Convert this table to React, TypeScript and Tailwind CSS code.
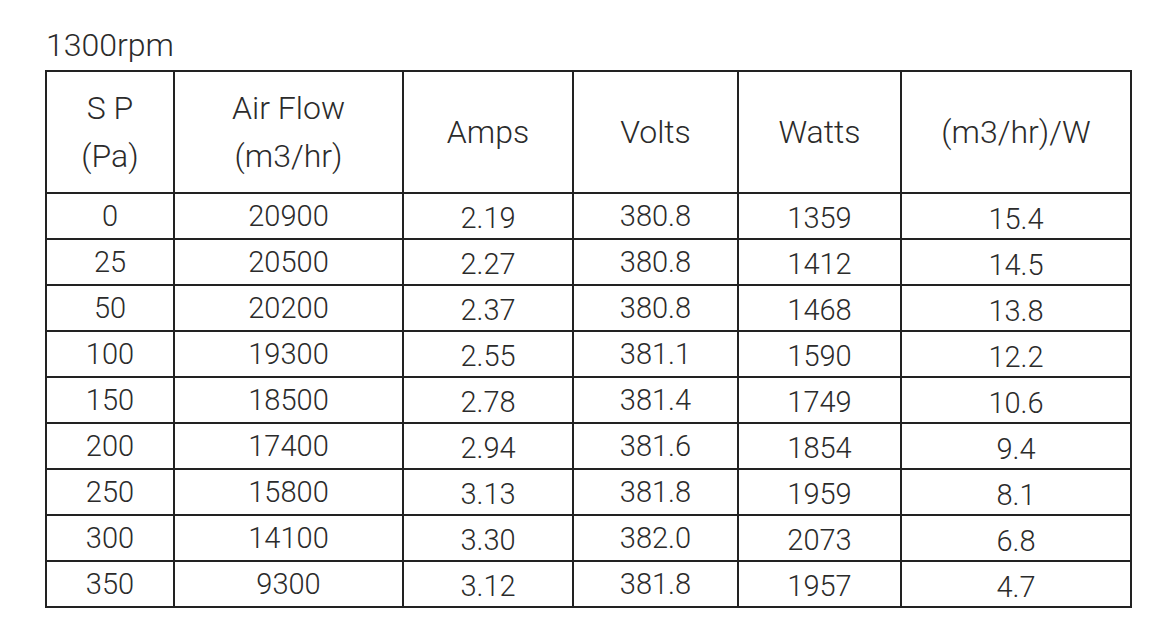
import React from 'react'

const rows = [
  ['0', '20900', '2.19', '380.8', '1359', '15.4'],
  ['25', '20500', '2.27', '380.8', '1412', '14.5'],
  ['50', '20200', '2.37', '380.8', '1468', '13.8'],
  ['100', '19300', '2.55', '381.1', '1590', '12.2'],
  ['150', '18500', '2.78', '381.4', '1749', '10.6'],
  ['200', '17400', '2.94', '381.6', '1854', '9.4'],
  ['250', '15800', '3.13', '381.8', '1959', '8.1'],
  ['300', '14100', '3.30', '382.0', '2073', '6.8'],
  ['350', '9300', '3.12', '381.8', '1957', '4.7'],
]

// some columns in the source sit a touch lower
const cellShift = ['', '', 'pt-1', '', 'pt-1', 'pt-[6px]']

const App = () => {
  return (
    <div className="min-h-screen bg-white pl-[45px] pt-[31px] text-[#2b2b2b] font-['Roboto','Liberation_Sans',sans-serif] font-light">
      <div className="text-[32px] leading-[29px] mb-[10px] pl-[1px]">1300rpm</div>

      <table className="table-fixed border-collapse w-[1087px] text-center">
        <colgroup>
          <col className="w-[128px]" />
          <col className="w-[229px]" />
          <col className="w-[170px]" />
          <col className="w-[165px]" />
          <col className="w-[163px]" />
          <col className="w-[230px]" />
        </colgroup>
        <thead>
          <tr className="h-[122px] text-[32px] leading-[48px]">
            <th className="border-2 border-[#222] font-light">S P<br />(Pa)</th>
            <th className="border-2 border-[#222] font-light">Air Flow<br />(m3/hr)</th>
            <th className="border-2 border-[#222] font-light">Amps</th>
            <th className="border-2 border-[#222] font-light">Volts</th>
            <th className="border-2 border-[#222] font-light">Watts</th>
            <th className="border-2 border-[#222] font-light">(m3/hr)/W</th>
          </tr>
        </thead>
        <tbody>
          {rows.map((r, i) => (
            <tr key={i} className="h-[46px] text-[29px] leading-[30px]">
              {r.map((v, j) => (
                <td key={j} className={'border-2 border-[#222] p-0 ' + cellShift[j]}>{v}</td>
              ))}
            </tr>
          ))}
        </tbody>
      </table>
    </div>
  )
}

export default App
